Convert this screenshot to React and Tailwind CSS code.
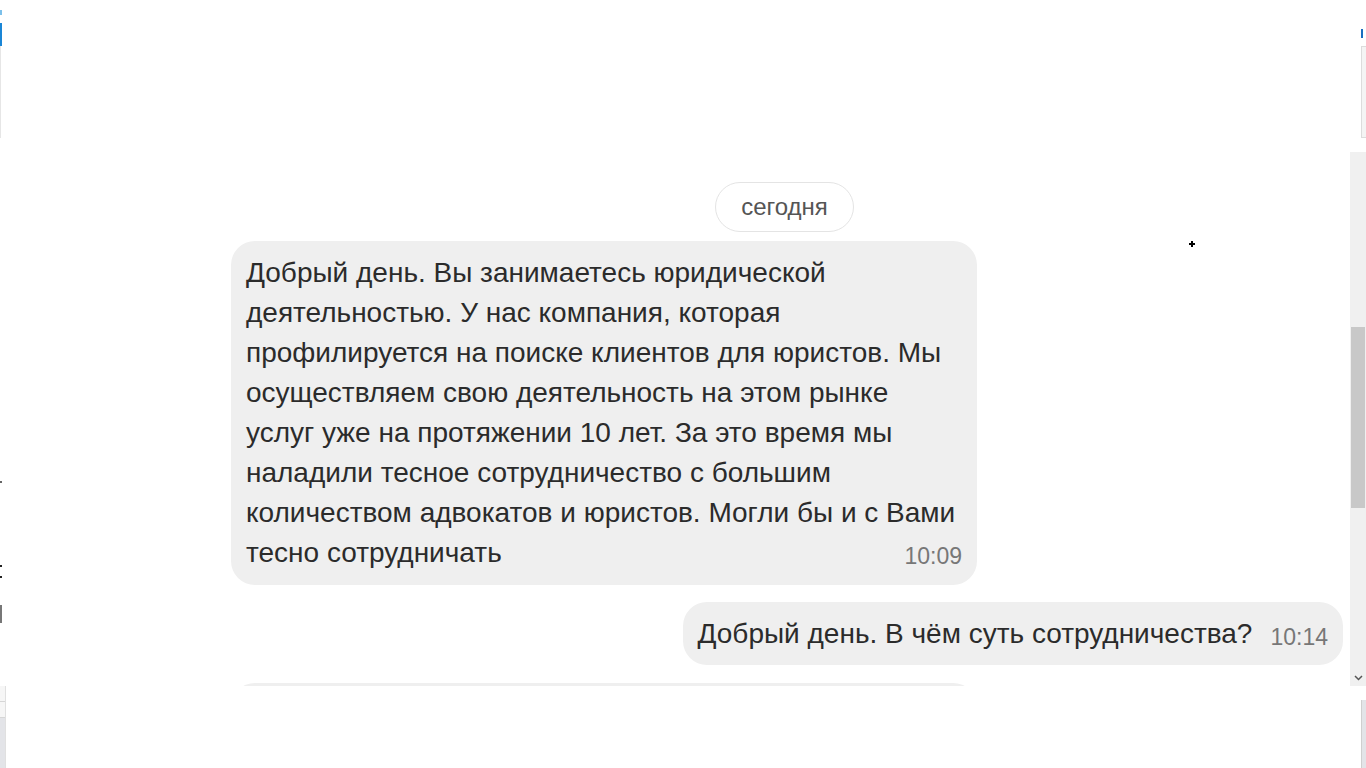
import React from "react";

const Bubble = ({ children, time, className = "" }) => (
  <div className={`rounded-[24px] bg-[#efefef] px-[15px] text-[28px] leading-[40px] text-[#2b2b2b] ${className}`}>
    {children}
    <span className="relative top-[3px] float-right ml-[18px] text-[23px] leading-[40px] text-[#777]">{time}</span>
  </div>
);

export default function App() {
  return (
    <div
      className="relative flex h-[768px] w-[1366px] flex-col overflow-hidden bg-white"
      style={{ fontFamily: '"Liberation Sans", Arial, sans-serif' }}
    >
      {/* left / right window slivers */}
      <div className="pointer-events-none absolute left-0 top-[10px] h-[5px] w-[2px] bg-[#7cc0ea]" />
      <div className="pointer-events-none absolute left-0 top-[23px] h-[23px] w-[2px] bg-[#1a86d6]" />
      <div className="pointer-events-none absolute left-0 top-[46px] h-[92px] w-[1px] bg-[#e6e6e6]" />
      <div className="pointer-events-none absolute left-0 top-[481px] h-[2px] w-[2px] bg-[#666]" />
      <div className="pointer-events-none absolute left-0 top-[565px] h-[2px] w-[2px] bg-[#222]" />
      <div className="pointer-events-none absolute left-0 top-[576px] h-[2px] w-[2px] bg-[#222]" />
      <div className="pointer-events-none absolute left-0 top-[605px] h-[18px] w-[2px] bg-[#777]" />
      <div className="pointer-events-none absolute right-[3px] top-[29px] h-[9px] w-[2px] bg-[#1a6fc0]" />
      <div className="pointer-events-none absolute right-0 top-[46px] h-[92px] w-[5px] border-y border-l border-[#dcdcdc] bg-[#f4f4f4]" />
      {/* cursor */}
      <div className="pointer-events-none absolute left-[1191px] top-[241px] h-[6px] w-[2px] bg-black" />
      <div className="pointer-events-none absolute left-[1189px] top-[243px] h-[2px] w-[6px] bg-black" />

      {/* header */}
      <div className="h-[152px] shrink-0" />

      {/* chat */}
      <div className="flex h-[534px] shrink-0">
        <div className="flex flex-1 flex-col overflow-hidden pl-[231px] pr-[7px] pt-[30px]">
          <div className="flex justify-center pr-[5px]">
            <div className="rounded-full border border-[#e4e4e4] bg-white px-[25px] text-[24px] leading-[48px] text-[#555]">
              сегодня
            </div>
          </div>
          <Bubble time="10:09" className="mt-[9px] w-[746px] py-[12px]">
            Добрый день. Вы занимаетесь юридической
            <br />
            деятельностью. У нас компания, которая
            <br />
            профилируется на поиске клиентов для юристов. Мы
            <br />
            осуществляем свою деятельность на этом рынке
            <br />
            услуг уже на протяжении 10 лет. За это время мы
            <br />
            наладили тесное сотрудничество с большим
            <br />
            количеством адвокатов и юристов. Могли бы и с Вами
            <br />
            тесно сотрудничать
          </Bubble>
          <div className="mt-[17px] flex justify-end">
            <Bubble time="10:14" className="pb-[11px] pt-[12px]">
              Добрый день. В чём суть сотрудничества?
            </Bubble>
          </div>
          <div className="mt-[18px] h-[200px] w-[746px] shrink-0 rounded-[24px] bg-[#efefef]" />
        </div>

        {/* scrollbar */}
        <div className="flex w-[16px] shrink-0 flex-col bg-[#f0f0f0]">
          <div className="h-[175px]" />
          <div className="mx-[1px] h-[181px] bg-[#c8c8c8]" />
          <div className="flex-1" />
          <div className="flex h-[16px] items-center justify-center text-[#555]">
            <svg width="9" height="6" viewBox="0 0 9 6">
              <path d="M1 1l3.5 3.5L8 1" fill="none" stroke="currentColor" strokeWidth="1.5" />
            </svg>
          </div>
        </div>
      </div>

      {/* footer */}
      <div className="relative flex-1 bg-white">
        <div className="absolute left-0 top-0 h-[82px] w-[6px] border-r border-[#e0e0e0]">
          <div className="h-[16px] border-b border-[#d6d6d6] bg-[#f6f6f6]" />
          <div className="h-[16px] border-b border-[#d6d6d6] bg-[#f6f6f6]" />
          <div className="h-full bg-[#e3e4e8]" />
        </div>
        <div className="absolute right-0 top-[14px] h-[68px] w-[5px] border-l border-[#cfcfcf] bg-[#e3e4e8]" />
      </div>
    </div>
  );
}
